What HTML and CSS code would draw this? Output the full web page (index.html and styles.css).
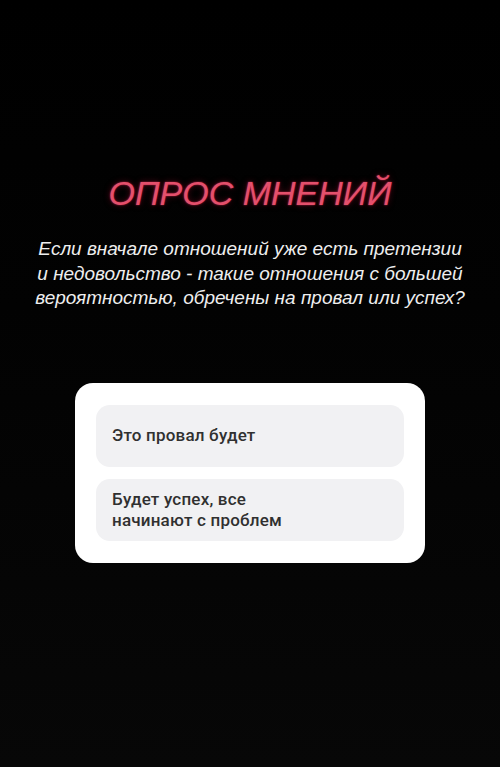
FILE: index.html
```html
<!DOCTYPE html>
<html lang="ru">
<head>
  <meta charset="UTF-8">
  <meta name="viewport" content="width=device-width, initial-scale=1.0">
  <title>Опрос мнений</title>
  <link rel="stylesheet" href="styles.css">
</head>
<body>
  <div class="story">
    <h1 class="poll-title">ОПРОС МНЕНИЙ</h1>
    <p class="poll-question">
      Если вначале отношений уже есть претензии<br>
      и недовольство - такие отношения с большей<br>
      вероятностью, обречены на провал или успех?
    </p>

    <div class="poll-card">
      <div class="poll-option">Это провал будет</div>
      <div class="poll-option">Будет успех, все<br>начинают с проблем</div>
    </div>
  </div>
</body>
</html>
```

FILE: styles.css
```css
html, body, h1, p {
  margin: 0;
  padding: 0;
}

body {
  width: 500px;
  height: 767px;
  background: linear-gradient(#000 0%, #020202 40%, #070707 100%);
  font-family: "Liberation Sans", Arial, sans-serif;
  overflow: hidden;
}

.story {
  display: flex;
  flex-direction: column;
  align-items: center;
  padding-top: 173px;
}

/* neon heading */
.poll-title {
  font-size: 34px;
  font-weight: normal;
  font-style: italic;
  line-height: 40px;
  color: #e4506c;
  text-shadow: 0 0 2px rgba(220, 40, 80, 0.8), 0 0 6px rgba(170, 20, 50, 0.5);
}

.poll-question {
  margin-top: 24px;
  font-size: 19px;
  font-style: italic;
  line-height: 24.5px;
  color: #eeeeee;
  text-align: center;
}

.poll-card {
  margin-top: 72px;
  width: 350px;
  box-sizing: border-box;
  padding: 22px 21px;
  background: #fff;
  border-radius: 18px;
  display: flex;
  flex-direction: column;
  gap: 12px;
}

.poll-option {
  min-height: 62px;
  box-sizing: border-box;
  padding: 10px 16px;
  display: flex;
  align-items: center;
  background: #f1f1f3;
  border-radius: 14px;
  font-family: "Roboto", "Liberation Sans", sans-serif;
  font-size: 17px;
  font-weight: 500;
  letter-spacing: 0.2px;
  line-height: 21px;
  color: #303030;
}
```
